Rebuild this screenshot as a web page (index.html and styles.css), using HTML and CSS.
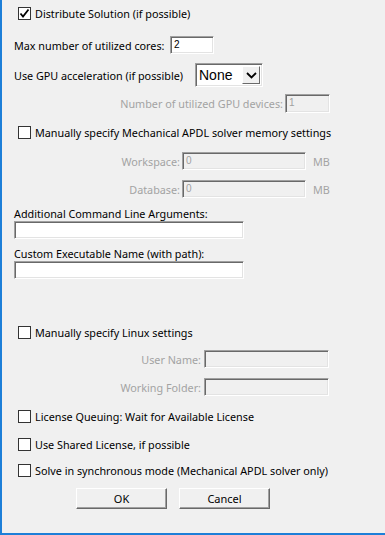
FILE: index.html
```html
<!DOCTYPE html>
<html lang="en">
<head>
    <meta charset="UTF-8">
    <meta name="viewport" content="width=device-width, initial-scale=1.0">
    <title>Solve Process Settings</title>
    <link rel="stylesheet" href="styles.css">
</head>
<body>
    <div class="dialog">
        <div class="check-row r1">
            <span class="box checked">
                <svg width="11" height="11" viewBox="0 0 11 11"><polyline points="1.5,5.5 4,8.5 9.5,1.5" fill="none" stroke="#000" stroke-width="1.8"/></svg>
            </span>
            <span>Distribute Solution (if possible)</span>
        </div>

        <div class="row r2">
            <span class="label cores-label">Max number of utilized cores:</span>
            <span class="field cores-field">2</span>
        </div>

        <div class="row r3">
            <span class="label gpu-label">Use GPU acceleration (if possible)</span>
            <span class="select">
                <span class="select-value">None</span>
                <span class="select-btn">
                    <svg width="11" height="7" viewBox="0 0 11 7"><polyline points="1,1 5.5,5.5 10,1" fill="none" stroke="#000" stroke-width="1.8"/></svg>
                </span>
            </span>
        </div>

        <div class="row r4">
            <span class="label right disabled w-gpu">Number of utilized GPU devices:</span>
            <span class="field off gpu-field">1</span>
        </div>

        <div class="check-row r5">
            <span class="box"></span>
            <span>Manually specify Mechanical APDL solver memory settings</span>
        </div>

        <div class="row r6">
            <span class="label right disabled w-mem">Workspace:</span>
            <span class="field off mem-field">0</span>
            <span class="unit disabled">MB</span>
        </div>

        <div class="row r7">
            <span class="label right disabled w-mem">Database:</span>
            <span class="field off mem-field">0</span>
            <span class="unit disabled">MB</span>
        </div>

        <div class="caption r8">Additional Command Line Arguments:</div>
        <div class="field wide"></div>

        <div class="caption r10">Custom Executable Name (with path):</div>
        <div class="field wide"></div>

        <div class="check-row r12">
            <span class="box"></span>
            <span>Manually specify Linux settings</span>
        </div>

        <div class="row r13">
            <span class="label right disabled w-linux">User Name:</span>
            <span class="field off linux-field"></span>
        </div>

        <div class="row r14">
            <span class="label right disabled w-linux">Working Folder:</span>
            <span class="field off linux-field"></span>
        </div>

        <div class="check-row r15">
            <span class="box"></span>
            <span>License Queuing: Wait for Available License</span>
        </div>

        <div class="check-row r16">
            <span class="box"></span>
            <span>Use Shared License, if possible</span>
        </div>

        <div class="check-row r17">
            <span class="box"></span>
            <span>Solve in synchronous mode (Mechanical APDL solver only)</span>
        </div>

        <div class="buttons">
            <button type="button" class="btn">OK</button>
            <button type="button" class="btn">Cancel</button>
        </div>
    </div>
</body>
</html>
```

FILE: styles.css
```css
html, body { margin: 0; padding: 0; }
body { background: #f0f0f0; font-family: "Noto Sans", "Open Sans", sans-serif; font-size: 10.8px; color: #000; }

.dialog { width: 385px; height: 535px; box-sizing: border-box; border-left: 2px solid #1d7fd8; border-bottom: 2px solid #1d7fd8; padding: 5px 0 0 12px; }

.row { display: flex; align-items: center; white-space: nowrap; }
.check-row { display: flex; align-items: center; height: 17px; padding-left: 4px; white-space: nowrap; }

.box { width: 11px; height: 11px; border: 1px solid #333; background: #fff; margin-right: 4px; display: flex; align-items: center; justify-content: center; flex: none; }

.label { flex: none; }
.right { text-align: right; }
.disabled { color: #a3a3a3; }

.field { box-sizing: border-box; height: 18px; background: #fff; border: 1px solid; border-color: #a0a0a0 #fff #fff #a0a0a0; box-shadow: inset 1px 1px 0 #696969, inset -1px -1px 0 #e3e3e3; font-family: "Liberation Sans", sans-serif; font-size: 10px; line-height: 16px; padding-left: 3px; }
.field.off { background: #f0f0f0; color: #a0a0a0; }

.r2 { margin-top: 14px; height: 18px; }
.cores-label { width: 156px; }
.cores-field { width: 44px; }

.r3 { margin-top: 9px; height: 24px; }
.gpu-label { width: 181px; }
.select { display: flex; width: 68px; height: 24px; box-sizing: border-box; background: #fff; border: 1px solid; border-color: #a0a0a0 #fff #fff #a0a0a0; box-shadow: inset 1px 1px 0 #696969, inset -1px -1px 0 #e3e3e3; padding: 2px; }
.select-value { flex: 1; font-family: "Liberation Sans", sans-serif; font-size: 14px; line-height: 18px; color: #000; padding-left: 1px; }
.select-btn { width: 18px; box-sizing: border-box; background: #f0f0f0; border: 1px solid; border-color: #fff #696969 #696969 #fff; display: flex; align-items: center; justify-content: center; }

.r4 { margin-top: 7px; height: 19px; }
.w-gpu { width: 269px; margin-right: 2px; }
.gpu-field { width: 45px; height: 19px; }

.r5 { margin-top: 11px; }

.r6 { margin-top: 11px; height: 18px; }
.r7 { margin-top: 10px; height: 18px; }
.w-mem { width: 166px; margin-right: 2px; }
.mem-field { width: 124px; }
.unit { margin-left: 7px; }

.caption { height: 15px; line-height: 15px; }
.r8 { margin-top: 8px; }
.r10 { margin-top: 7px; }
.wide { width: 230px; }

.r12 { margin-top: 45px; }

.r13 { margin-top: 9px; height: 18px; }
.r14 { margin-top: 10px; height: 18px; }
.w-linux { width: 187px; margin-right: 3px; }
.linux-field { width: 125px; }

.r15 { margin-top: 12px; }
.r16 { margin-top: 11px; }
.r17 { margin-top: 9px; }

.buttons { display: flex; gap: 12px; margin: 9px 0 0 62px; }
.btn { width: 91px; height: 21px; padding: 0; background: #f0f0f0; font-family: "Noto Sans", "Open Sans", sans-serif; font-size: 11px; color: #000; border: 1px solid; border-color: #fff #696969 #696969 #fff; box-shadow: inset -1px -1px 0 #a0a0a0; }
```
